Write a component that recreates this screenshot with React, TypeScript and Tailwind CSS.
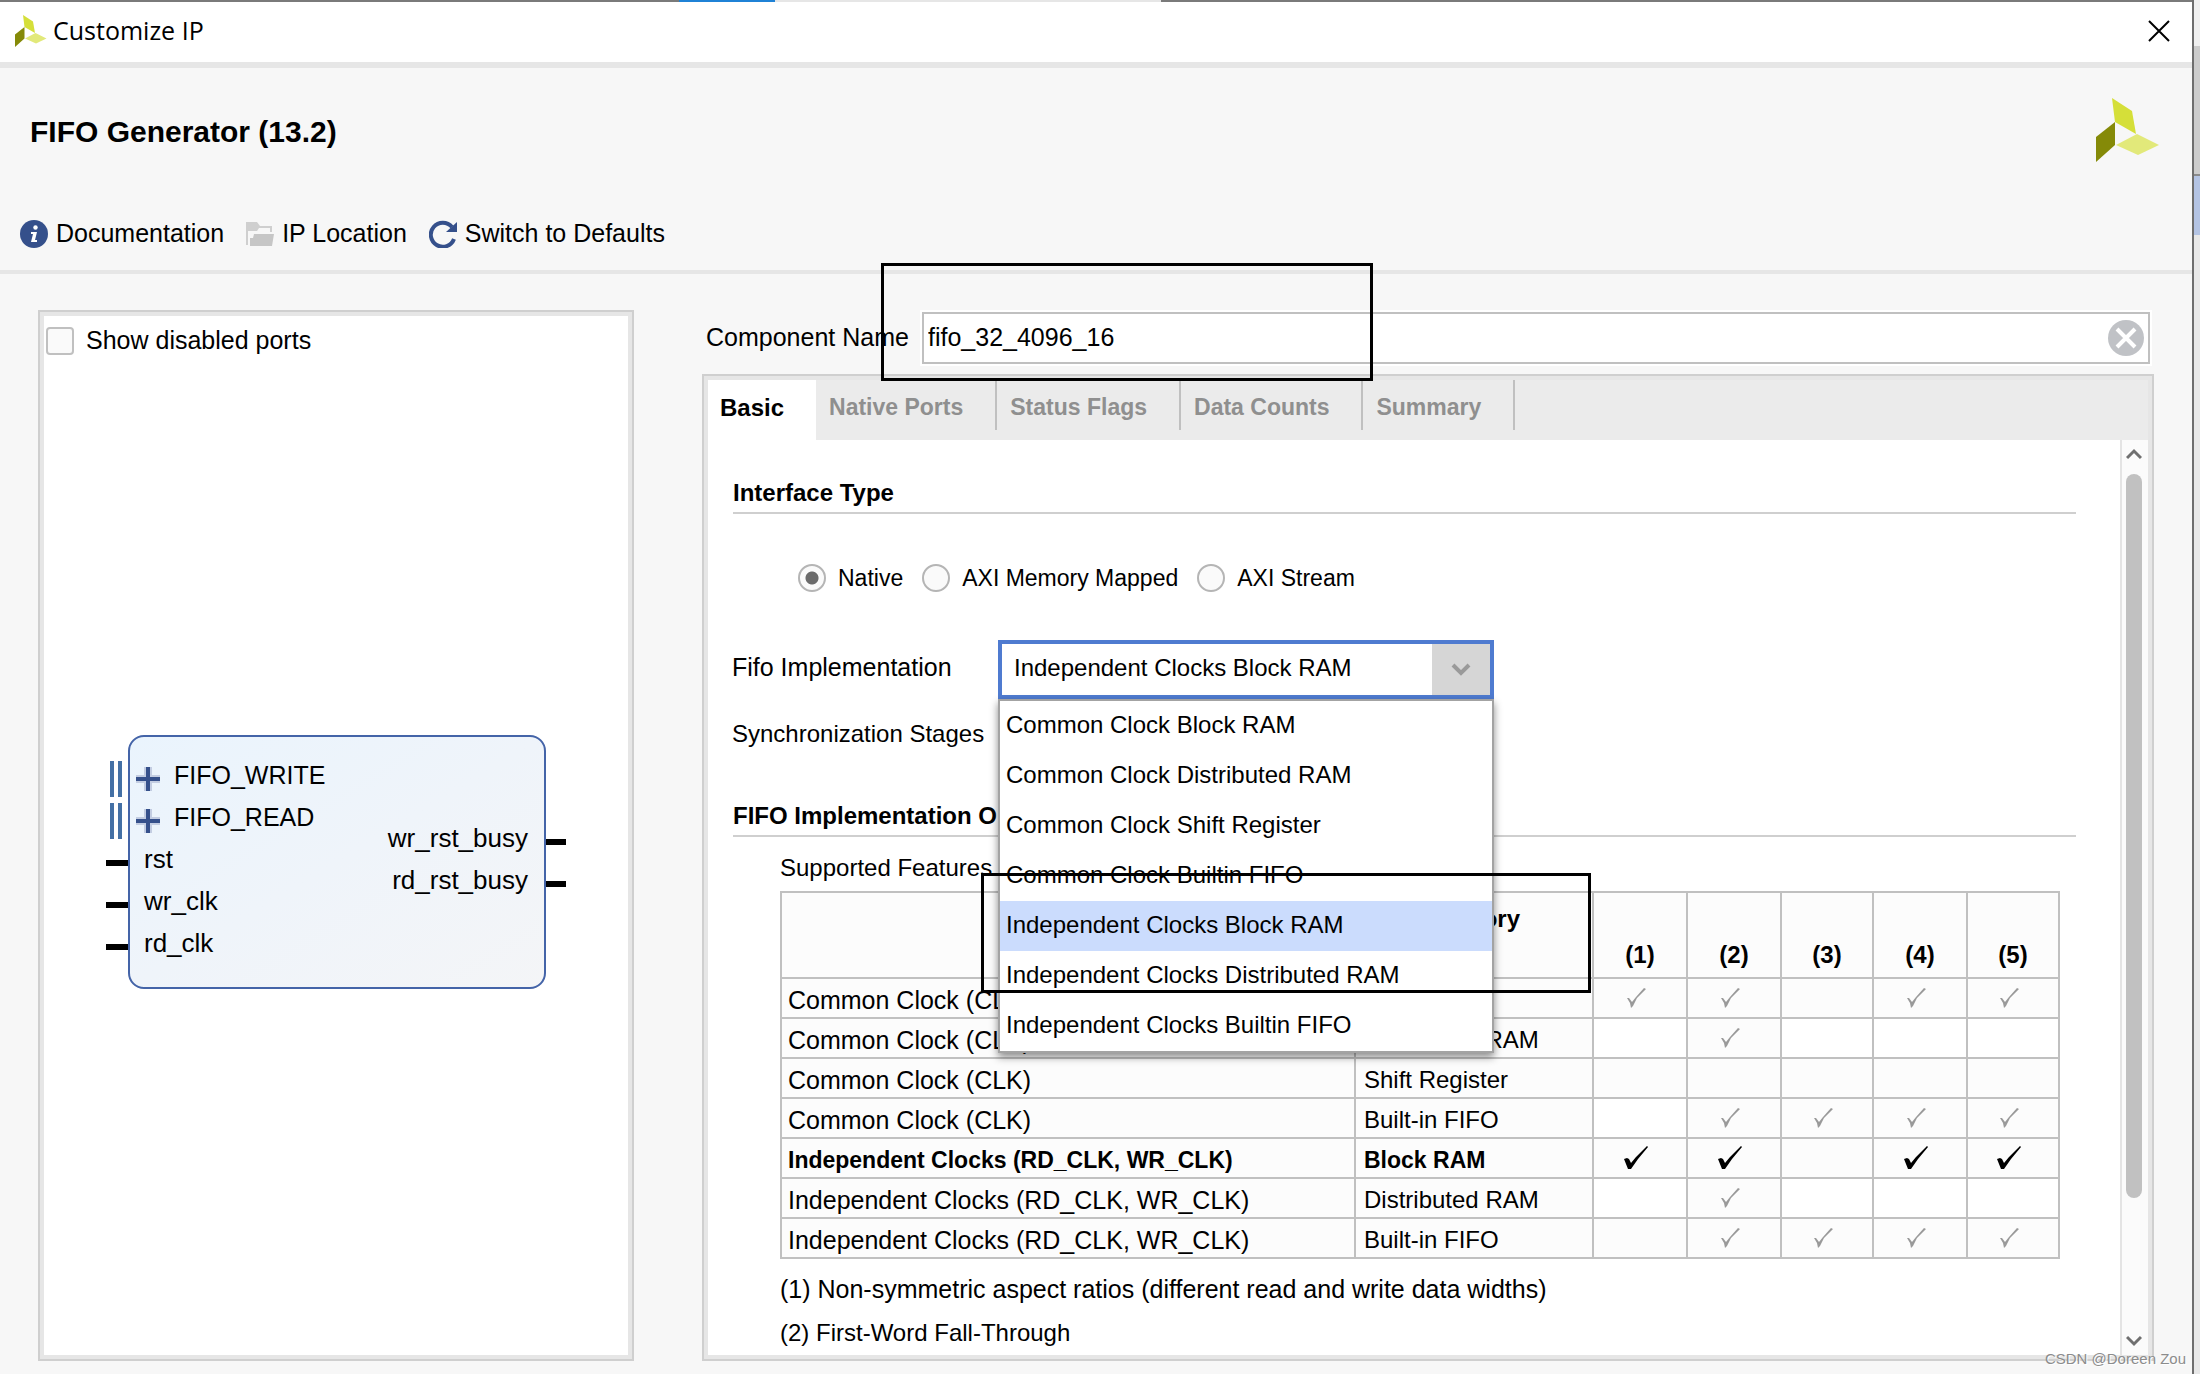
import { useState } from "react";

interface TableRow {
  clocks: string;
  memory: string;
  support: boolean[];
}

const tabs = ["Basic", "Native Ports", "Status Flags", "Data Counts", "Summary"];

const interfaceTypes = ["Native", "AXI Memory Mapped", "AXI Stream"];

const implementations = [
  "Common Clock Block RAM",
  "Common Clock Distributed RAM",
  "Common Clock Shift Register",
  "Common Clock Builtin FIFO",
  "Independent Clocks Block RAM",
  "Independent Clocks Distributed RAM",
  "Independent Clocks Builtin FIFO",
];

const COMMON = "Common Clock (CLK)";
const INDEPENDENT = "Independent Clocks (RD_CLK, WR_CLK)";

const rows: TableRow[] = [
  { clocks: COMMON, memory: "Block RAM", support: [true, true, false, true, true] },
  { clocks: COMMON, memory: "Distributed RAM", support: [false, true, false, false, false] },
  { clocks: COMMON, memory: "Shift Register", support: [false, false, false, false, false] },
  { clocks: COMMON, memory: "Built-in FIFO", support: [false, true, true, true, true] },
  { clocks: INDEPENDENT, memory: "Block RAM", support: [true, true, false, true, true] },
  { clocks: INDEPENDENT, memory: "Distributed RAM", support: [false, true, false, false, false] },
  { clocks: INDEPENDENT, memory: "Built-in FIFO", support: [false, true, true, true, true] },
];

const Logo = ({ className }: { className: string }) => (
  <svg viewBox="0 0 64 64" className={className} aria-hidden="true">
    <polygon points="16,0 36,13 40,36 19,24" fill="#d5df39" />
    <polygon points="0,39 19,24 19,47 0,64" fill="#858a08" />
    <polygon points="20,47 41,36 63,47 42,57" fill="#e2e97a" />
  </svg>
);

const Check = ({ strong }: { strong: boolean }) =>
  strong ? (
    <svg viewBox="0 0 26 26" className="mx-auto h-[26px] w-[26px]" aria-label="yes">
      <path d="M1 14 L4 13 L6 14 L8 18 L13 12 L24 1 L25 2 L15 14 L8 24 L5 24 Z" fill="#000" />
    </svg>
  ) : (
    <svg viewBox="0 0 20 20" className="mx-auto h-5 w-5" aria-label="yes">
      <path d="M1 10 L3 10 L6 14 L10 9 L18 0 L20 1 L11 10 L7 18 L5 20 L4 15 Z" fill="#9a9a9a" />
    </svg>
  );

const SectionTitle = ({ children }: { children: string }) => (
  <h2 className="ml-px h-[41px] border-b-2 border-[#cfcfcf] text-[24px] leading-10 font-bold">{children}</h2>
);

const BusPort = ({ name }: { name: string }) => (
  <li className="relative flex h-[42px] items-center pl-1.5">
    <span className="absolute top-[3px] -left-5 h-9 w-3 border-x-4 border-[#4470a5]" />
    <svg viewBox="0 0 24 24" className="h-6 w-6" aria-hidden="true">
      <path d="M8 0h8v8h8v8h-8v8H8v-8H0V8h8z" fill="#c3cde2" />
      <path d="M10 0h4v10h10v4H14v10h-4V14H0v-4h10z" fill="#35508b" />
    </svg>
    <span className="pb-2 pl-3.5 text-[25px]">{name}</span>
  </li>
);

const InPort = ({ name }: { name: string }) => (
  <li className="relative flex h-[42px] items-center pl-3.5">
    <span className="absolute top-[18px] -left-6 h-1.5 w-[22px] bg-black" />
    <span className="pb-2">{name}</span>
  </li>
);

const OutPort = ({ name }: { name: string }) => (
  <li className="relative flex h-[42px] items-center justify-end pr-4">
    <span className="absolute top-[18px] -right-[22px] h-1.5 w-5 bg-black" />
    <span className="pb-2">{name}</span>
  </li>
);

const PortsPanel = () => (
  <section className="flex w-[596px] shrink-0 flex-col border-2 border-[#cfcfcf] bg-white ring-4 ring-[#e6e6e6] ring-inset">
    <label className="mt-0.5 ml-1.5 flex h-[54px] items-center gap-3 text-[25px]">
      <input
        type="checkbox"
        className="h-7 w-7 appearance-none rounded-sm border-2 border-[#c0c0c0] bg-[#fafafa]"
      />
      Show disabled ports
    </label>
    <div className="flex flex-1 items-center justify-center pb-1 pl-0.5">
      <div className="flex h-[254px] w-[418px] justify-between rounded-2xl border-2 border-[#4464a8] bg-linear-to-br from-[#eaf4fd] via-[#eff4fa] to-[#f4f5f7] text-[26px] leading-9">
        <ul className="pt-[21px]">
          <BusPort name="FIFO_WRITE" />
          <BusPort name="FIFO_READ" />
          <InPort name="rst" />
          <InPort name="wr_clk" />
          <InPort name="rd_clk" />
        </ul>
        <ul className="pt-[84px]">
          <OutPort name="wr_rst_busy" />
          <OutPort name="rd_rst_busy" />
        </ul>
      </div>
    </div>
  </section>
);

const ImplementationSelect = () => {
  const [value, setValue] = useState(implementations[4]);

  return (
    <div className="relative h-[59px] w-[496px]">
      <select
        id="implementation"
        value={value}
        onChange={(e) => setValue(e.target.value)}
        className="h-full w-full appearance-none border-4 border-[#4f7bd0] bg-white pb-1 pl-3 outline-none"
      >
        {implementations.map((name) => (
          <option key={name}>{name}</option>
        ))}
      </select>
      <span className="pointer-events-none absolute inset-y-1 right-1 flex w-[58px] items-center justify-center bg-[#d6d6d6]">
        <svg viewBox="0 0 20 14" className="h-3.5 w-5" aria-hidden="true">
          <path d="M2 2l8 8 8-8" fill="none" stroke="#9a9a9a" strokeWidth="4" />
        </svg>
      </span>
      <ul
        role="listbox"
        aria-label="Fifo Implementation"
        className="absolute top-full left-0 z-10 w-full border-2 border-[#a3a3a3] bg-white shadow-[0_4px_8px_rgba(0,0,0,0.45)]"
      >
        {implementations.map((name) => (
          <li
            key={name}
            role="option"
            aria-selected={name === value}
            onClick={() => setValue(name)}
            className="h-[50px] pl-1.5 leading-[48px] aria-selected:bg-[#cbdcfd]"
          >
            {name}
          </li>
        ))}
      </ul>
    </div>
  );
};

const FeaturesTable = () => (
  <table className="w-[1280px] table-fixed border-collapse border-2 border-[#c0c0c0] leading-8 [&_td]:border-2 [&_td]:border-[#c0c0c0] [&_th]:border-2 [&_th]:border-[#c0c0c0]">
    <colgroup>
      <col className="w-[574px]" />
      <col className="w-[238px]" />
      <col className="w-[94px]" />
      <col className="w-[94px]" />
      <col className="w-[92px]" />
      <col className="w-[94px]" />
      <col className="w-[92px]" />
    </colgroup>
    <thead>
      <tr className="h-[86px] bg-[#fcfcfc]">
        <th />
        <th className="pt-2.5 align-top">Memory</th>
        {[1, 2, 3, 4, 5].map((n) => (
          <th key={n} className="pb-1.5 align-bottom">
            ({n})
          </th>
        ))}
      </tr>
    </thead>
    <tbody>
      {rows.map((row, index) => {
        const active = index === 4;
        return (
          <tr key={index} className={active ? "h-10 text-[23px] font-bold" : "h-10"}>
            <td className={active ? "bg-[#fcfcfc] pt-1 pl-1.5" : "bg-[#fcfcfc] pt-1 pl-1.5 text-[25px]"}>
              {row.clocks}
            </td>
            <td className="bg-[#fcfcfc] pt-1 pl-2">{row.memory}</td>
            {row.support.map((supported, i) => (
              <td key={i} className={supported || index % 2 === 0 ? "bg-[#fcfcfc] pr-2" : "pr-2"}>
                {supported && <Check strong={active} />}
              </td>
            ))}
          </tr>
        );
      })}
    </tbody>
  </table>
);

const BasicTab = () => {
  const [type, setType] = useState("Native");

  return (
    <div className="flex-1 pt-[33px] pr-11 pl-6">
      <SectionTitle>Interface Type</SectionTitle>
      <div className="mt-11 ml-[66px] flex h-10 items-center gap-[19px] text-[23px]">
        {interfaceTypes.map((name) => (
          <label key={name} className="flex items-center gap-3">
            <input
              type="radio"
              name="interface"
              checked={type === name}
              onChange={() => setType(name)}
              className="h-7 w-7 appearance-none rounded-full border-2 border-[#b5b5b5] bg-[#fafafa] checked:bg-[radial-gradient(circle,#6b6b6b_6px,#fafafa_7px)]"
            />
            {name}
          </label>
        ))}
      </div>
      <div className="mt-[42px] flex items-center">
        <label htmlFor="implementation" className="w-[266px] pb-1 text-[25px]">
          Fifo Implementation
        </label>
        <ImplementationSelect />
      </div>
      <p className="mt-[17px] h-9 leading-9">Synchronization Stages</p>
      <div className="mt-11">
        <SectionTitle>FIFO Implementation Options</SectionTitle>
      </div>
      <div className="ml-12">
        <p className="mt-3 mb-1 h-[38px] leading-[38px]">Supported Features</p>
        <FeaturesTable />
        <p className="mt-2 text-[25px] leading-[44px]">
          (1) Non-symmetric aspect ratios (different read and write data widths)
        </p>
        <p className="leading-[44px]">(2) First-Word Fall-Through</p>
      </div>
    </div>
  );
};

const Scrollbar = () => (
  <div className="flex w-7 flex-col items-center border-l-2 border-[#e4e4e4] bg-[#fbfbfb] pt-2 pr-0.5 pb-2">
    <svg viewBox="0 0 16 12" className="h-3 w-4" aria-hidden="true">
      <path d="M1 10l7-7 7 7" fill="none" stroke="#707070" strokeWidth="3" />
    </svg>
    <div className="mt-3.5 h-[724px] w-4 rounded-full bg-[#c1c1c1]" />
    <svg viewBox="0 0 16 12" className="mt-auto h-3 w-4" aria-hidden="true">
      <path d="M1 2l7 7 7-7" fill="none" stroke="#707070" strokeWidth="3" />
    </svg>
  </div>
);

const App = () => {
  const [componentName, setComponentName] = useState("fifo_32_4096_16");

  return (
    <div
      className="relative flex h-screen overflow-hidden bg-[#e8e8e8] text-[24px] text-black"
      style={{ fontFamily: '"Liberation Sans", Arial, sans-serif' }}
    >
      <div className="flex min-w-0 flex-1 flex-col border-r-2 border-[#6e6e6e] bg-[#f7f7f7]">
        <div className="flex h-0.5 shrink-0 bg-[#7a7a7a]">
          <div className="ml-[679px] w-24 bg-[#1f82d6]" />
          <div className="w-[386px] bg-[#e6e6e6]" />
        </div>
        <header className="flex h-[66px] shrink-0 items-center border-b-6 border-[#e6e6e6] bg-white pr-[21px] pb-0.5 pl-[15px]">
          <Logo className="h-8 w-8" />
          <h1 className="ml-1.5 font-['Open_Sans'] text-[25px]">Customize IP</h1>
          <button aria-label="Close" className="ml-auto">
            <svg viewBox="0 0 24 24" className="h-6 w-6">
              <path d="M2 2l20 20M22 2L2 22" stroke="#000" strokeWidth="2" />
            </svg>
          </button>
        </header>

        <div className="shrink-0 border-b-4 border-[#e6e6e6]">
          <div className="flex h-[124px] items-center justify-between pr-8 pl-[30px]">
            <h2 className="pt-0.5 text-[30px] font-bold">FIFO Generator (13.2)</h2>
            <Logo className="h-16 w-16" />
          </div>
          <nav className="flex h-[78px] items-center gap-[22px] pt-1.5 pl-5 text-[25px]">
            <button className="flex items-center gap-2">
              <svg viewBox="0 0 28 28" className="h-7 w-7" aria-hidden="true">
                <circle cx="14" cy="14" r="14" fill="#35508b" />
                <circle cx="15.5" cy="7.5" r="2.2" fill="#fff" />
                <path d="M11 12h6l-2 8h2v2h-6l2-8h-2z" fill="#fff" />
              </svg>
              Documentation
            </button>
            <button className="flex items-center gap-2">
              <svg viewBox="0 0 28 26" className="h-[26px] w-7" aria-hidden="true">
                <path d="M0 1h11l3 4h12v6h-2V7H13l-2 3H2v14H0z" fill="#cfcfcf" />
                <path d="M8 13h20l-2 12H4V17h3z" fill="#c6c6c6" />
              </svg>
              IP Location
            </button>
            <button className="flex items-center gap-2">
              <svg viewBox="0 0 28 28" className="h-7 w-7" aria-hidden="true">
                <path d="M25 19a12 12 0 1 1-2-12" fill="none" stroke="#35508b" strokeWidth="4" />
                <path d="M28 2v10H17z" fill="#35508b" />
              </svg>
              Switch to Defaults
            </button>
          </nav>
        </div>

        <main className="flex min-h-0 flex-1 pt-9 pr-[38px] pb-[13px] pl-[38px]">
          <PortsPanel />
          <div className="ml-[68px] flex min-w-0 flex-1 flex-col">
            <div className="flex h-[56px] items-center pr-1 pl-1">
              <label htmlFor="component-name" className="w-[216px] text-[25px]">
                Component Name
              </label>
              <div className="flex h-[52px] flex-1 items-center border-2 border-[#c0c0c0] bg-white pr-1 ring-2 ring-white">
                <input
                  id="component-name"
                  value={componentName}
                  onChange={(e) => setComponentName(e.target.value)}
                  className="h-full min-w-0 flex-1 pb-0.5 pl-1 text-[25px] outline-none"
                />
                <button aria-label="Clear" onClick={() => setComponentName("")}>
                  <svg viewBox="0 0 36 36" className="h-9 w-9">
                    <circle cx="18" cy="18" r="18" fill="#c0c2c6" />
                    <path d="M9 9l18 18M27 9L9 27" stroke="#fff" strokeWidth="4" />
                  </svg>
                </button>
              </div>
            </div>

            <section className="mt-2 flex min-h-0 flex-1 flex-col overflow-hidden border-2 border-[#cfcfcf]">
              <div className="flex min-h-0 flex-1 flex-col overflow-hidden border-4 border-[#e6e6e6] bg-white">
                <div role="tablist" className="flex h-[60px] shrink-0 bg-[#ebebeb] font-bold">
                  {tabs.map((tab, index) =>
                    index === 0 ? (
                      <button key={tab} role="tab" aria-selected="true" className="bg-white pr-8 pb-1 pl-3">
                        {tab}
                      </button>
                    ) : (
                      <button
                        key={tab}
                        role="tab"
                        aria-selected="false"
                        className="h-[50px] border-r-2 border-[#c0c0c0] pt-1 pr-8 pl-[13px] text-[23px] text-[#8f8f8f]"
                      >
                        {tab}
                      </button>
                    ),
                  )}
                </div>
                <div className="flex min-h-0 flex-1">
                  <BasicTab />
                  <Scrollbar />
                </div>
              </div>
            </section>
          </div>
        </main>
      </div>

      {/* strip of the window behind the dialog */}
      <div className="flex w-1.5 flex-col">
        <div className="h-[46px] bg-[#f0f0f0]" />
        <div className="h-32 bg-[#cccccc]" />
        <div className="h-[61px] border-t-2 border-[#8a8a8a] bg-[#b4c4e4]" />
      </div>

      {/* marker boxes */}
      <div className="pointer-events-none absolute top-[263px] left-[881px] z-20 h-[118px] w-[492px] border-3 border-black" />
      <div className="pointer-events-none absolute top-[873px] left-[981px] z-20 h-[120px] w-[610px] border-3 border-black" />

      <p className="absolute right-3.5 bottom-1 text-[15px] text-[#8c8c8c] [text-shadow:1px_1px_0_#fff]">
        CSDN @Doreen Zou
      </p>
    </div>
  );
};

export default App;
